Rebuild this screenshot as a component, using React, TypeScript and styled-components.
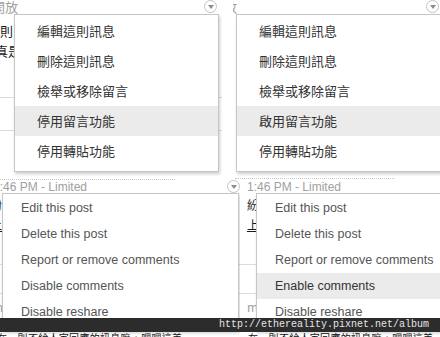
import React from 'react';
import styled, { createGlobalStyle } from 'styled-components';

const CJK = `"Noto Sans CJK TC", "Liberation Sans", sans-serif`;
const LATIN = `"Liberation Sans", Arial, sans-serif`;

const GlobalStyle = createGlobalStyle`
  html, body {
    margin: 0;
    padding: 0;
    background: #fff;
  }
  body {
    font-family: ${LATIN};
  }
`;

// whole picture: four cropped screenshots stitched together
const Shot = styled.div`
  position: relative;
  width: 440px;
  height: 337px;
  overflow: hidden;
  display: grid;
  grid-template-rows: 180px 157px;
  background: #fff;
`;

const Strip = styled.div<{ $cols: string }>`
  display: grid;
  grid-template-columns: ${p => p.$cols};
  min-height: 0;
`;

const Crop = styled.div`
  position: relative;
  overflow: hidden;
`;

const Post = styled.div<{ $shift: number; $width: number }>`
  position: relative;
  width: ${p => p.$width}px;
  margin-left: ${p => p.$shift}px;
  height: 100%;
`;

const Header = styled.div<{ $h: number }>`
  display: flex;
  align-items: center;
  height: ${p => p.$h}px;
`;

const Stamp = styled.span<{ $cjk?: boolean; $indent: number }>`
  margin-left: ${p => p.$indent}px;
  font-family: ${p => (p.$cjk ? CJK : LATIN)};
  font-size: ${p => (p.$cjk ? 13 : 12)}px;
  line-height: 13px;
  color: #a0a0a0;
  white-space: nowrap;
`;

const Caret = styled.span<{ $gap: number }>`
  align-self: flex-start;
  margin-left: auto;
  margin-right: ${p => p.$gap}px;
  flex: none;
  width: 11px;
  height: 11px;
  border: 1px solid #c2c2c2;
  border-radius: 50%;
  display: flex;
  align-items: center;
  justify-content: center;

  &::after {
    content: '';
    margin-top: 1px;
    border-left: 3.5px solid transparent;
    border-right: 3.5px solid transparent;
    border-top: 4px solid #8c8c8c;
  }
`;

const Body = styled.div`
  display: flex;
  flex-direction: column;
`;

const Line = styled.div<{ $indent: number; $top?: number; $tone?: string; $size?: number; $link?: boolean }>`
  margin-left: ${p => p.$indent}px;
  margin-top: ${p => p.$top ?? 0}px;
  font-family: ${CJK};
  font-size: ${p => p.$size ?? 13}px;
  line-height: 20px;
  height: 20px;
  color: ${p => p.$tone ?? '#1a1a1a'};
  white-space: nowrap;
  text-decoration: ${p => (p.$link ? 'underline' : 'none')};
`;

const Caption = styled.div<{ $indent: number; $top: number }>`
  margin-left: ${p => p.$indent}px;
  margin-top: ${p => p.$top}px;
  font-family: ${CJK};
  font-size: 10px;
  letter-spacing: 0.3px;
  line-height: 13px;
  color: #111;
  white-space: nowrap;
`;

const Rule = styled.div<{ $top: number }>`
  margin-top: ${p => p.$top}px;
  height: 1px;
  background: #dcdcdc;
`;

const PostEnd = styled.div<{ $top: number; $indent: number; $width: number }>`
  margin-top: ${p => p.$top}px;
  margin-left: ${p => p.$indent}px;
  width: ${p => p.$width}px;
  border-top: 1px dotted #c8c8c8;
`;

// dropdown menu opened from the caret
const Menu = styled.ul<{ $left: number; $top: number; $width: number }>`
  position: absolute;
  left: ${p => p.$left}px;
  top: ${p => p.$top}px;
  width: ${p => p.$width}px;
  box-sizing: border-box;
  margin: 0;
  padding: 1px 0 5px;
  list-style: none;
  background: #fff;
  border: 1px solid #c6c6c6;
  box-shadow: 1px 2px 3px rgba(0, 0, 0, 0.2);
`;

const Item = styled.li<{ $cjk?: boolean; $active?: boolean }>`
  height: ${p => (p.$cjk ? 30 : 26)}px;
  line-height: ${p => (p.$cjk ? 30 : 26)}px;
  padding-left: ${p => (p.$cjk ? 22 : 18)}px;
  font-family: ${p => (p.$cjk ? CJK : LATIN)};
  font-size: ${p => (p.$cjk ? 13 : 12.5)}px;
  color: ${p => (p.$cjk ? '#333' : p.$active ? '#333' : '#555')};
  background: ${p => (p.$active ? '#ebebeb' : 'transparent')};
  white-space: nowrap;
`;

const Watermark = styled.div`
  position: absolute;
  left: 0;
  right: 0;
  top: 318px;
  height: 14px;
  background: #2c2c2c;
  text-align: right;
  padding-right: 11px;
  font-family: "Liberation Mono", "DejaVu Sans Mono", monospace;
  font-size: 10px;
  line-height: 14px;
  color: #e6e6e6;
`;

const zhItems = (enable: boolean) => [
  '編輯這則訊息',
  '刪除這則訊息',
  '檢舉或移除留言',
  enable ? '啟用留言功能' : '停用留言功能',
  '停用轉貼功能',
];

const enItems = (enable: boolean) => [
  'Edit this post',
  'Delete this post',
  'Report or remove comments',
  enable ? 'Enable comments' : 'Disable comments',
  'Disable reshare',
];

const ZhMenu: React.FC<{ enable: boolean }> = ({ enable }) => (
  <Menu $left={14} $top={14} $width={205}>
    {zhItems(enable).map((label, i) => (
      <Item key={label} $cjk $active={i === 3}>{label}</Item>
    ))}
  </Menu>
);

const EnMenu: React.FC<{ enable: boolean; left: number }> = ({ enable, left }) => (
  <Menu $left={left} $top={13} $width={237}>
    {enItems(enable).map((label, i) => (
      <Item key={label} $active={enable && i === 3}>{label}</Item>
    ))}
  </Menu>
);

const CAPTION = '在一則不給人家回應的訊息嘛，嘿嘿這美';

const App: React.FC = () => (
  <>
    <GlobalStyle />
    <Shot>
      <Strip $cols="233px 1fr">
        <Crop>
          <Post $shift={0} $width={222}>
            <Header $h={13}>
              <Stamp $cjk $indent={-8}>開放</Stamp>
              <Caret $gap={5} />
            </Header>
            <Body>
              <Line $indent={0} $top={8}>則</Line>
              <Line $indent={-5}>真是</Line>
              <Rule $top={36} />
              <Rule $top={32} />
              <PostEnd $top={48} $indent={0} $width={175} />
            </Body>
            <ZhMenu enable={false} />
          </Post>
        </Crop>
        <Crop>
          <Post $shift={-11} $width={222}>
            <Header $h={13}>
              <Stamp $cjk $indent={2}>放</Stamp>
              <Caret $gap={5} />
            </Header>
            <Body>
              <PostEnd $top={165} $indent={13} $width={160} />
            </Body>
            <ZhMenu enable />
          </Post>
        </Crop>
      </Strip>

      <Strip $cols="240px 1fr">
        <Crop>
          <Post $shift={0} $width={240}>
            <Header $h={15}>
              <Stamp $indent={-7}>1:46 PM - Limited</Stamp>
              <Caret $gap={0} />
            </Header>
            <Body>
              <Line $indent={-10} $size={12}>紛</Line>
              <Line $indent={-10} $size={12} $link>上</Line>
              <Rule $top={29} />
              <Rule $top={28} />
              <Line $indent={-8} $top={3} $size={12} $tone="#a0a0a0">m</Line>
              <Caption $indent={-3} $top={14}>{CAPTION}</Caption>
            </Body>
            <EnMenu enable={false} left={2} />
          </Post>
        </Crop>
        <Crop>
          <Post $shift={0} $width={240}>
            <Header $h={15}>
              <Stamp $indent={7}>1:46 PM - Limited</Stamp>
              <Caret $gap={0} />
            </Header>
            <Body>
              <Line $indent={7} $size={12}>紛</Line>
              <Line $indent={7} $size={12} $link>上</Line>
              <Rule $top={29} />
              <Rule $top={28} />
              <Line $indent={7} $top={3} $size={12} $tone="#a0a0a0">m</Line>
              <Caption $indent={8} $top={14}>{CAPTION}</Caption>
            </Body>
            <EnMenu enable left={16} />
          </Post>
        </Crop>
      </Strip>

      <Watermark>http://ethereality.pixnet.net/album</Watermark>
    </Shot>
  </>
);

export default App;
